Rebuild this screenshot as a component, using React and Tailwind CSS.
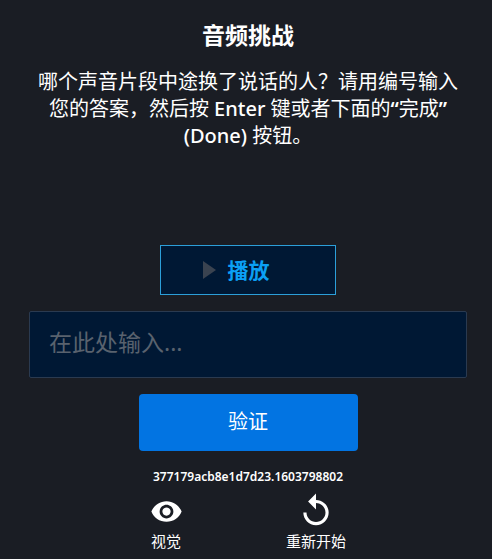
import React from 'react';

export default function App() {
  return (
    <div className="w-[492px] h-[559px] overflow-hidden bg-[#1a1d24]">
      <div className="w-[496px] text-white flex flex-col items-center font-['Noto_Sans','Noto_Sans_CJK_SC',sans-serif]">
        <h1 className="mt-[19px] h-[32px] text-[23px] leading-[32px] font-bold">音频挑战</h1>
        <p className="mt-[17px] w-[430px] h-[81px] text-center text-[20px] leading-[27px] font-normal">
          哪个声音片段中途换了说话的人？请用编号输入您的答案，然后按 <span className="font-medium">Enter</span> 键或者下面的<span className="font-semibold">“</span>完成<span className="font-semibold">”</span> <span className="font-medium">(Done)</span> 按钮。
        </p>

        <button className="mt-[96px] w-[176px] h-[50px] pr-[24px] bg-[#001834] border border-[#2c9fd9] flex items-center justify-center gap-[12px]">
          <svg width="13" height="18" viewBox="0 0 13 18" className="block">
            <path d="M0 0 L13 9 L0 18 Z" fill="#3a4350" />
          </svg>
          <span className="text-[21px] leading-[28px] font-bold text-[#0ba0f5]">播放</span>
        </button>

        <div className="mt-[16px] w-[438px] h-[67px] pb-[6px] bg-[#001834] border border-[#2a3a50] rounded-[2px] flex items-center pl-[19px]">
          <span className="text-[23px] leading-[30px] text-[#59626e]">在此处输入...</span>
        </div>

        <button className="mt-[16px] w-[219px] h-[57px] pb-[2px] rounded-[4px] bg-[#0274e2] text-[20px] leading-[28px] text-white">验证</button>

        <div className="mt-[17px] h-[18px] text-[12px] leading-[18px] font-semibold">377179acb8e1d7d23.1603798802</div>

        <div className="mt-[6px] mr-[14px] w-[230px] flex justify-between items-start">
          <div className="w-[80px] flex flex-col items-center">
            <div className="h-[38px] flex items-center justify-center">
              <svg width="33" height="33" viewBox="0 0 24 24" fill="#ffffff" className="block">
                <path d="M12 4.5C7 4.5 2.73 7.61 1 12c1.73 4.39 6 7.5 11 7.5s9.27-3.11 11-7.5c-1.73-4.39-6-7.5-11-7.5zM12 17c-2.76 0-5-2.24-5-5s2.24-5 5-5 5 2.24 5 5-2.24 5-5 5zm0-8c-1.66 0-3 1.34-3 3s1.34 3 3 3 3-1.34 3-3-1.34-3-3-3z" />
              </svg>
            </div>
            <span className="text-[15px] leading-[20px] mt-[1px]">视觉</span>
          </div>
          <div className="w-[80px] flex flex-col items-center">
            <div className="h-[38px] flex items-center justify-center">
              <svg width="38" height="38" viewBox="0 0 24 24" fill="#ffffff" className="block">
                <path d="M12 5V1L7 6l5 5V7c3.31 0 6 2.69 6 6s-2.69 6-6 6-6-2.69-6-6H4c0 4.42 3.58 8 8 8s8-3.58 8-8-3.58-8-8-8z" />
              </svg>
            </div>
            <span className="text-[15px] leading-[20px] mt-[1px] whitespace-nowrap">重新开始</span>
          </div>
        </div>
      </div>
    </div>
  );
}
